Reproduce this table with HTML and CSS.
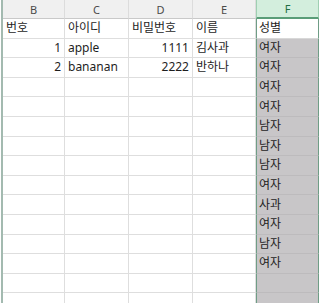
FILE: index.html
```html
<!DOCTYPE html>
<html lang="ko">
<head>
<meta charset="utf-8">
<link rel="stylesheet" href="styles.css">
</head>
<body>
<div class="sheet">
  <div class="grid">
    <div class="hd">B</div><div class="hd">C</div><div class="hd">D</div><div class="hd">E</div><div class="hd sel">F</div>

    <div class="c">번호</div><div class="c">아이디</div><div class="c">비밀번호</div><div class="c">이름</div><div class="c f active">성별</div>
    <div class="c num">1</div><div class="c">apple</div><div class="c num">1111</div><div class="c">김사과</div><div class="c f">여자</div>
    <div class="c num">2</div><div class="c">bananan</div><div class="c num">2222</div><div class="c">반하나</div><div class="c f">여자</div>
    <div class="c"></div><div class="c"></div><div class="c"></div><div class="c"></div><div class="c f">여자</div>
    <div class="c"></div><div class="c"></div><div class="c"></div><div class="c"></div><div class="c f">여자</div>
    <div class="c"></div><div class="c"></div><div class="c"></div><div class="c"></div><div class="c f">남자</div>
    <div class="c"></div><div class="c"></div><div class="c"></div><div class="c"></div><div class="c f">남자</div>
    <div class="c"></div><div class="c"></div><div class="c"></div><div class="c"></div><div class="c f">남자</div>
    <div class="c"></div><div class="c"></div><div class="c"></div><div class="c"></div><div class="c f">여자</div>
    <div class="c"></div><div class="c"></div><div class="c"></div><div class="c"></div><div class="c f">사과</div>
    <div class="c"></div><div class="c"></div><div class="c"></div><div class="c"></div><div class="c f">여자</div>
    <div class="c"></div><div class="c"></div><div class="c"></div><div class="c"></div><div class="c f">남자</div>
    <div class="c"></div><div class="c"></div><div class="c"></div><div class="c"></div><div class="c f">여자</div>
    <div class="c"></div><div class="c"></div><div class="c"></div><div class="c"></div><div class="c f"></div>
    <div class="c"></div><div class="c"></div><div class="c"></div><div class="c"></div><div class="c f"></div>
    <div class="c"></div><div class="c"></div><div class="c"></div><div class="c"></div><div class="c f"></div>
  </div>
</div>
</body>
</html>
```

FILE: styles.css
```css
html, body {
  margin: 0;
  padding: 0;
  background: #ffffff;
  overflow: hidden;
}
body {
  width: 321px;
  height: 303px;
  font-family: "Noto Sans", "Noto Sans CJK KR", sans-serif;
  font-size: 12px;
  color: #1e1e1e;
}
.sheet {
  height: 303px;
  overflow: hidden;
  margin-left: 1px;
  border-left: 2px solid #a3bab0;
}
.grid {
  display: grid;
  grid-template-columns: 62px 64px 64px 63px 63px;
  grid-template-rows: 19px;
  grid-auto-rows: 19.6px;
}
.hd {
  background: #f0f0f0;
  color: #4a4a4a;
  font-size: 11px;
  display: flex;
  align-items: center;
  justify-content: center;
  border-right: 1px solid #dcdcdc;
  border-bottom: 1px solid #c9c9c9;
  box-sizing: border-box;
}
.hd.sel {
  background: #d3eedd;
  color: #1f6e44;
  border-left: 1px solid #9fcfb2;
  border-right: 1px solid #9fcfb2;
  border-bottom: 2px solid #5a9d78;
}
.c {
  box-sizing: border-box;
  border-right: 1px solid #dedede;
  border-bottom: 1px solid #dedede;
  padding: 0 3px;
  display: flex;
  align-items: center;
  white-space: nowrap;
  line-height: 1;
}
.c.num {
  justify-content: flex-end;
}
.c.f {
  background: #c8c6c8;
  border-left: 1px solid #6f9d86;
  border-right: 1px solid #6f9d86;
  border-bottom: 1px solid #bdbbbd;
  padding-left: 2px;
}
.c.f.active {
  background: #ffffff;
  border-bottom: 1px solid #d8d8d8;
}
```
